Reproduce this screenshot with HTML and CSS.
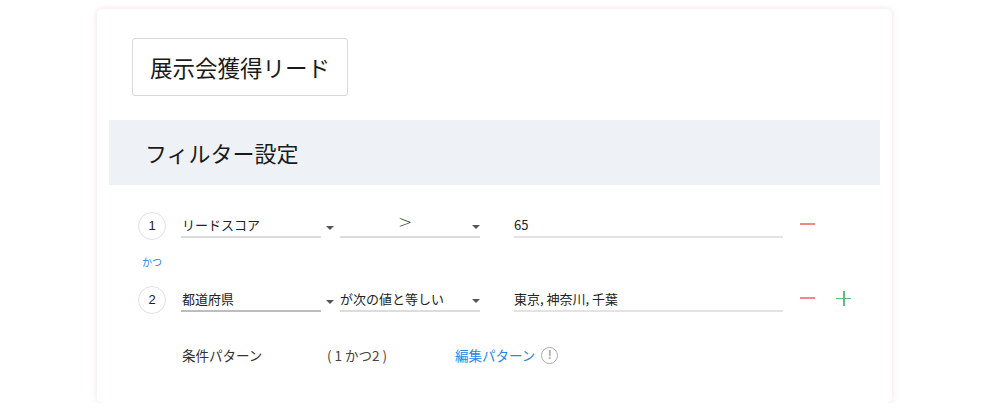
FILE: index.html
```html
<!DOCTYPE html>
<html lang="ja">
<head>
<meta charset="utf-8">
<link rel="stylesheet" href="styles.css">
</head>
<body>
<div class="card">
  <div class="title-box">展示会獲得リード</div>
  <div class="band">フィルター設定</div>
  <div class="rows">
    <div class="row">
      <div class="num">1</div>
      <div class="field f1">リードスコア</div>
      <div class="arrow a1"></div>
      <div class="field f2 center"><span class="op">&gt;</span><span class="arrow a2"></span></div>
      <div class="field value">65</div>
      <div class="minus"></div>
    </div>
    <div class="kazu">かつ</div>
    <div class="row">
      <div class="num">2</div>
      <div class="field f1 dark">都道府県</div>
      <div class="arrow a1"></div>
      <div class="field f2">が次の値と等しい<span class="arrow a2"></span></div>
      <div class="field value">東京, 神奈川, 千葉</div>
      <div class="minus"></div>
      <div class="plus"></div>
    </div>
    <div class="pattern">
      <span class="p-label">条件パターン</span>
      <span class="p-value">( 1 かつ2 )</span>
      <span class="p-link">編集パターン</span>
      <span class="info">!</span>
    </div>
  </div>
</div>
</body>
</html>
```
FILE: styles.css
```css
html, body {
  margin: 0;
  background: #ffffff;
}
body {
  font-family: "Noto Sans CJK JP", "Noto Sans", sans-serif;
  color: #333;
}
.card {
  margin: 9px 0 0 97px;
  width: 795px;
  height: 394px;
  box-sizing: border-box;
  background: #fff;
  border-radius: 6px;
  box-shadow: 0 0 6px rgba(225, 195, 212, 0.55);
  padding-top: 29px;
}
.title-box {
  margin-left: 35px;
  width: 216px;
  height: 58px;
  box-sizing: border-box;
  border: 1px solid #d9d9d9;
  border-radius: 3px;
  font-size: 22.5px;
  line-height: 56px;
  padding-left: 17px;
  color: #1a1a1a;
}
.band {
  margin: 24px 12px 0 12px;
  height: 65px;
  background: #eef2f7;
  font-size: 22px;
  line-height: 65px;
  padding-left: 36px;
  color: #1a1a1a;
}
.rows {
  padding-left: 41px;
  margin-top: 21px;
}
.row {
  display: flex;
  align-items: center;
  height: 40px;
}
.num {
  width: 28px;
  height: 28px;
  box-sizing: border-box;
  border: 1px solid #e6dde6;
  border-radius: 50%;
  font-family: "Liberation Sans", sans-serif;
  font-size: 13px;
  line-height: 26px;
  text-align: center;
  color: #222;
  margin-right: 15px;
}
.field {
  height: 24px;
  box-sizing: border-box;
  border-bottom: 2px solid #dcdcdc;
  font-size: 13px;
  line-height: 21px;
  color: #222;
  position: relative;
  white-space: nowrap;
}
.f1 {
  width: 140px;
  padding-left: 1px;
}
.f1.dark {
  border-bottom-color: #bdbdbd;
}
.f2 {
  width: 140px;
}
.f2.center {
  text-align: center;
}
.op {
  font-family: "DejaVu Sans", sans-serif;
  font-size: 17px;
  font-weight: 300;
  line-height: 16px;
  color: #333;
  display: inline-block;
  vertical-align: top;
  padding-right: 10px;
}
.arrow {
  width: 0;
  height: 0;
  border-left: 4px solid transparent;
  border-right: 4px solid transparent;
  border-top: 4px solid #555;
}
.a1 {
  margin: 4px 6px 0 5px;
}
.a2 {
  position: absolute;
  right: 0;
  top: 11px;
}
.value {
  width: 269px;
  margin-left: 34px;
  border-bottom-color: #e3e3e3;
  padding-left: 0;
}
.minus {
  width: 15px;
  height: 2px;
  background: #ec8a8a;
  margin-left: 17px;
  margin-top: -4px;
}
.row .minus + .plus {
  margin-left: 21px;
}
.plus {
  width: 15px;
  height: 15px;
  position: relative;
  margin-top: -4px;
}
.plus::before, .plus::after {
  content: "";
  position: absolute;
  background: #5cbf7e;
}
.plus::before {
  left: 0;
  right: 0;
  top: 7px;
  height: 1.5px;
}
.plus::after {
  top: 0;
  bottom: 0;
  left: 7px;
  width: 1.5px;
}
.kazu {
  margin: 9px 0 0 4px;
  height: 14px;
  font-size: 10px;
  line-height: 14px;
  color: #2a7de1;
}
.row + .kazu + .row {
  margin-top: 11px;
}
.pattern {
  display: flex;
  align-items: center;
  height: 30px;
  margin-top: 20px;
  padding-left: 44px;
  font-size: 13.5px;
  color: #333;
}
.p-label {
  width: 145px;
}
.p-value {
  width: 128px;
  color: #444;
}
.p-link {
  color: #1e88e5;
}
.info {
  width: 17px;
  height: 17px;
  box-sizing: border-box;
  border: 1.5px solid #aaa;
  border-radius: 50%;
  color: #aaa;
  font-family: "Liberation Sans", sans-serif;
  font-size: 12px;
  font-weight: bold;
  line-height: 14px;
  text-align: center;
  margin-left: 6px;
}
```
